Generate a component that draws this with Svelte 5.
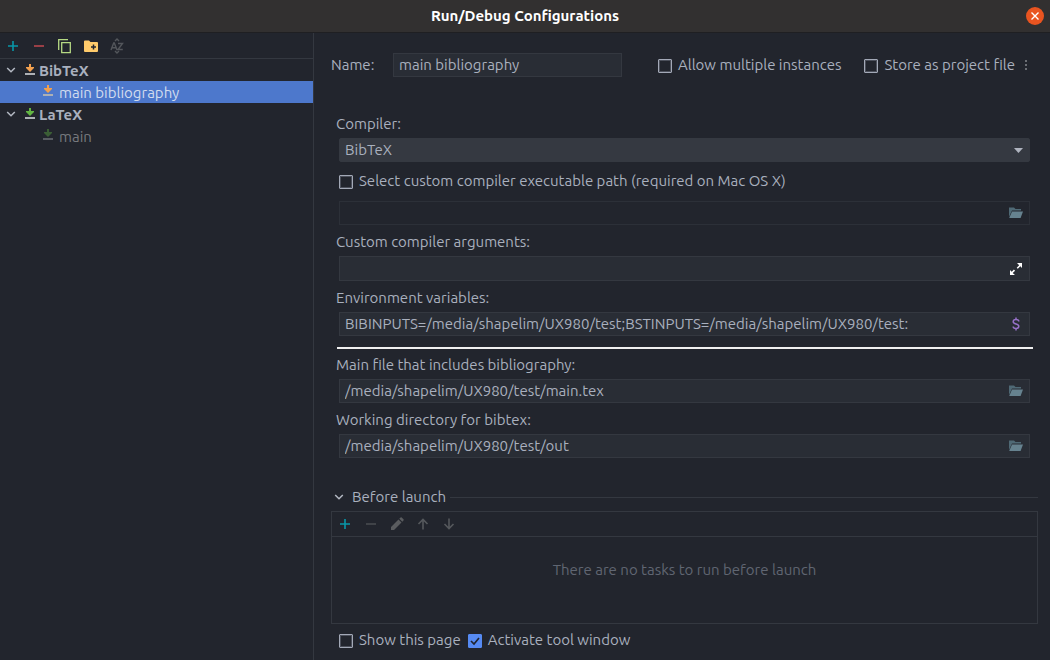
<script>
  let name = $state('main bibliography');
  let compiler = $state('BibTeX');
  let compilerPath = $state('');
  let compilerArgs = $state('');
  let environment = $state('BIBINPUTS=/media/shapelim/UX980/test;BSTINPUTS=/media/shapelim/UX980/test:');
  let mainFile = $state('/media/shapelim/UX980/test/main.tex');
  let workDir = $state('/media/shapelim/UX980/test/out');
  let multiple = $state(false);
  let store = $state(false);
  let customPath = $state(false);
  let showPage = $state(false);
  let activate = $state(true);

  const groups = [
    { title: 'BibTeX', color: '#f2a04e', items: [{ title: 'main bibliography', selected: true }] },
    { title: 'LaTeX', color: '#62b543', items: [{ title: 'main', dim: true }] }
  ];
</script>

{#snippet chevron()}
  <svg width="10" height="8" viewBox="0 0 10 8"><path d="M1.2 2 5 5.8 8.8 2" fill="none" stroke="#b4b9c3" stroke-width="1.5" /></svg>
{/snippet}

{#snippet configIcon(color)}
  <svg width="12" height="14" viewBox="0 0 12 14">
    <path d="M5 1h2v3h3v1L6 9 2 5V4h3z" fill={color} />
    <path d="M1 10h10v2H1z" fill="#adb0b5" />
  </svg>
{/snippet}

{#snippet folder()}
  <svg width="16" height="14" viewBox="0 0 16 14">
    <path d="M1 11V1.500h5L7.500 3H13v1.500H4z" fill="#4f6975" />
    <path d="M4 5.500h11L12.600 12H1.200z" fill="#66828f" />
  </svg>
{/snippet}

{#snippet plus()}
  <svg width="16" height="16" viewBox="0 0 16 16"><path d="M3 8h10M8 3v10" stroke="#0997a8" stroke-width="1.600" /></svg>
{/snippet}

{#snippet minus(color)}
  <svg width="16" height="16" viewBox="0 0 16 16"><path d="M3 8h10" stroke={color} stroke-width="1.800" /></svg>
{/snippet}

<div class="dialog">
  <header>
    <h1>Run/Debug Configurations</h1>
    <button class="close" aria-label="Close">
      <svg width="18" height="18" viewBox="0 0 18 18"><path d="m5.500 5.500 7 7m0-7-7 7" stroke="#fff" stroke-width="1.400" /></svg>
    </button>
  </header>

  <div class="body">
    <aside>
      <div class="tools">
        <button aria-label="Add">{@render plus()}</button>
        <button aria-label="Remove">{@render minus('#a8434a')}</button>
        <button aria-label="Copy">
          <svg width="16" height="16" viewBox="0 0 16 16" fill="none" stroke="#b5d983" stroke-width="1.300"><path d="M1.700 12V1.700H11" /><path d="M4.700 4.700h8.600v10H4.700z" /></svg>
        </button>
        <button aria-label="Create folder">
          <svg width="16" height="16" viewBox="0 0 16 16"><path d="M1 3.500q0-1 1-1h4l1.500 1.500H14q1 0 1 1V13q0 1-1 1H2q-1 0-1-1z" fill="#ffcb6b" /><path d="M8 9h5M10.500 6.500v5" stroke="#23252d" stroke-width="1.500" /></svg>
        </button>
        <button aria-label="Sort">
          <svg width="16" height="16" viewBox="0 0 16 16" fill="none" stroke="#53565b" stroke-width="1.400"><path d="M2 12 4.700 5h.6L8 12M3 9.700h4M9 5.500h4.500L9 11.500h4.800" /><path d="m6 3 2-2 2 2M6 13l2 2 2-2" /></svg>
        </button>
      </div>
      <ul class="tree">
        {#each groups as group}
          <li>
            <div class="row group">{@render chevron()}<span class="icon">{@render configIcon(group.color)}</span><span class="title">{group.title}</span></div>
            <ul>
              {#each group.items as item}
                <li class="row item" class:selected={item.selected} class:dim={item.dim}>
                  <span class="icon">{@render configIcon(group.color)}</span><span class="title">{item.title}</span>
                </li>
              {/each}
            </ul>
          </li>
        {/each}
      </ul>
    </aside>

    <main>
      <div class="top">
        <label for="name">Name:</label>
        <div class="field name"><input id="name" type="text" bind:value={name} /></div>
        <label class="check multi"><input type="checkbox" bind:checked={multiple} />Allow multiple instances</label>
        <label class="check"><input type="checkbox" bind:checked={store} />Store as project file</label>
        <button class="more" aria-label="Storage options">
          <svg width="4" height="14" viewBox="0 0 4 14" fill="#6b6e74"><path d="M1 2h2v2H1zM1 6h2v2H1zM1 10h2v2H1z" /></svg>
        </button>
      </div>

      <div class="form">
        <label for="compiler">Compiler:</label>
        <div class="field combo">
          <select id="compiler" bind:value={compiler}>
            <option>BibTeX</option>
            <option>Biber</option>
          </select>
          <svg width="10" height="6" viewBox="0 0 10 6"><path d="M0 1h9L4.500 6z" fill="#afb4bf" /></svg>
        </div>
        <label class="check custom"><input type="checkbox" bind:checked={customPath} />Select custom compiler executable path (required on Mac OS X)</label>
        <div class="field off">
          <input type="text" aria-label="Compiler path" disabled={!customPath} bind:value={compilerPath} />
          <button aria-label="Browse compiler" disabled={!customPath}>{@render folder()}</button>
        </div>
        <label for="args">Custom compiler arguments:</label>
        <div class="field tall">
          <input id="args" type="text" bind:value={compilerArgs} />
          <button aria-label="Expand">
            <svg width="16" height="16" viewBox="0 0 16 16"><path d="M9 2h5v5l-1.700-1.700-2.500 2.500-1.100-1.100 2.500-2.500zM2 9l1.700 1.700L5.900 8.500 7.100 9.700l-2.400 2.400L7 14H2z" fill="#fff" /></svg>
          </button>
        </div>
        <label for="env">Environment variables:</label>
        <div class="field">
          <input id="env" type="text" bind:value={environment} />
          <button aria-label="Edit variables">
            <svg width="16" height="16" viewBox="0 0 16 16"><path d="M10.800 5.500C10.800 4 9.600 3.500 8 3.500S5.200 4.300 5.200 5.700 6.200 7.500 8 8s2.800 1 2.800 2.300S9.600 12.500 8 12.500s-2.800-.600-2.800-2M8 1.500v2M8 12.500v2" fill="none" stroke="#9871c9" stroke-width="1.500" /></svg>
          </button>
        </div>
        <hr />
        <label for="mainfile">Main file that includes bibliography:</label>
        <div class="field">
          <input id="mainfile" type="text" bind:value={mainFile} />
          <button aria-label="Browse main file">{@render folder()}</button>
        </div>
        <label for="workdir">Working directory for bibtex:</label>
        <div class="field">
          <input id="workdir" type="text" bind:value={workDir} />
          <button aria-label="Browse directory">{@render folder()}</button>
        </div>
      </div>

      <section>
        <h2>{@render chevron()}<span>Before launch</span></h2>
        <div class="tasks">
          <div class="tools">
            <button aria-label="Add task">{@render plus()}</button>
            <button aria-label="Remove task" disabled>{@render minus('#45484c')}</button>
            <button aria-label="Edit task" disabled>
              <svg width="16" height="16" viewBox="0 0 16 16" fill="#5a5c5f"><path d="m2 11 7.500-7.500 3 3L5 14H2zM10.300 2.700l1.200-1.200q.600-.500 1.200 0l1.800 1.800q.500.600 0 1.200l-1.200 1.200z" /></svg>
            </button>
            <button aria-label="Move up" disabled>
              <svg width="16" height="16" viewBox="0 0 16 16" fill="none" stroke="#55585c" stroke-width="1.600"><path d="M8 13.500V4M3.500 8 8 3.500 12.500 8" /></svg>
            </button>
            <button aria-label="Move down" disabled>
              <svg width="16" height="16" viewBox="0 0 16 16" fill="none" stroke="#55585c" stroke-width="1.600"><path d="M8 2.500V12M3.500 8 8 12.500 12.500 8" /></svg>
            </button>
          </div>
          <p>There are no tasks to run before launch</p>
        </div>
      </section>

      <div class="bottom">
        <label class="check"><input type="checkbox" bind:checked={showPage} />Show this page</label>
        <label class="check"><input type="checkbox" bind:checked={activate} />Activate tool window</label>
      </div>
    </main>
  </div>
</div>

<style>
  :global(body) { margin: 0; background: #22252d; }
  .dialog {
    display: flex;
    flex-direction: column;
    min-height: 100vh;
    color: #a9b0be;
    font: 15px/20px Ubuntu, "Noto Sans", sans-serif;
  }
  .dialog :global(svg) { display: block; flex: none; }
  button { display: flex; align-items: center; justify-content: center; padding: 0; border: 0; background: none; }
  header {
    display: grid;
    grid-template-columns: 1fr auto 1fr;
    align-items: center;
    height: 33px;
    box-sizing: border-box;
    padding: 0 6px;
    background: #323030;
    border-bottom: 1px solid #1f1f22;
  }
  h1 { grid-column: 2; margin: 0; font-size: 15px; line-height: 20px; font-weight: 700; color: #fff; }
  .close { justify-self: end; width: 18px; height: 18px; border-radius: 50%; background: #e95420; }
  .body { display: grid; grid-template-columns: 314px 1fr; flex: 1; }
  aside { border-right: 1px solid #343840; }
  .tools { display: flex; gap: 10px; align-items: center; height: 25px; padding: 0 5px; border-bottom: 1px solid #343840; }
  ul { margin: 0; padding: 0; list-style: none; }
  .row { display: flex; align-items: center; height: 22px; }
  .title { padding-top: 2px; }
  .group { padding-left: 6px; font-weight: 700; }
  .group .icon { margin: 0 3px 0 8px; }
  .item { padding-left: 42px; }
  .item .icon { margin: 0 5px 2px 0; }
  .selected { background: #4d78cc; color: #d2dcee; }
  .dim { color: #77797d; }
  .dim .icon { opacity: 0.4; }
  main { display: flex; flex-direction: column; min-width: 0; padding: 20px 12px 10px 17px; }
  .top { display: flex; align-items: center; }
  .top > label:first-child { width: 62px; }
  .field {
    display: flex;
    align-items: center;
    box-sizing: border-box;
    height: 24px;
    padding: 0 5px;
    background: #292d35;
    border: 1px solid #343840;
  }
  .field input, select {
    flex: 1;
    min-width: 0;
    padding: 0;
    border: 0;
    outline: 0;
    background: none;
    color: inherit;
    font: inherit;
  }
  .name { width: 229px; }
  .tall { height: 25px; }
  .multi { margin: 0 23px 0 36px; }
  .check { display: flex; align-items: center; gap: 6px; white-space: nowrap; }
  .check input {
    appearance: none;
    flex: none;
    box-sizing: border-box;
    width: 14px;
    height: 14px;
    margin: 1px 0 0;
    border: 1px solid #a3a9b7;
    box-shadow: inset 0 0 0 1px #a3a9b755;
    border-radius: 1px;
  }
  .check input:checked {
    border-color: #568af2;
    box-shadow: none;
    background: #568af2 url("data:image/svg+xml,%3Csvg xmlns='http://www.w3.org/2000/svg' viewBox='0 0 12 12'%3E%3Cpath d='m2 6 3 3 5-6' fill='none' stroke='%23202430' stroke-width='1.700'/%3E%3C/svg%3E");
  }
  .more { margin-left: 9px; }
  .form { display: flex; flex-direction: column; padding: 37px 8px 0 5px; }
  .form > label { margin-bottom: 4px; }
  .form > .field { margin: 0 0 7px 3px; }
  .form > .check { margin: 2px 0 10px 3px; }
  .form .off { background: none; border-color: #2c3038; }
  .combo { background: #353941; border-color: #353941; border-radius: 2px; }
  select { appearance: none; }
  hr { align-self: stretch; height: 2px; margin: 4px -3px 6px 1px; border: 0; background: #f0f0f0; }
  section { margin-top: 22px; }
  h2 { display: flex; align-items: center; margin: 0 0 4px 3px; font-size: 15px; line-height: 20px; font-weight: 400; }
  h2 span { margin: 0 4px 0 8px; }
  h2::after { content: ""; flex: 1; height: 1px; background: #343840; }
  .tasks { border: 1px solid #343840; min-height: 111px; }
  .tasks .tools { height: 24px; }
  .tasks p { margin: 23px 0 0; text-align: center; color: #606672; }
  .bottom { display: flex; gap: 7px; padding: 6px 8px 0; }
</style>
